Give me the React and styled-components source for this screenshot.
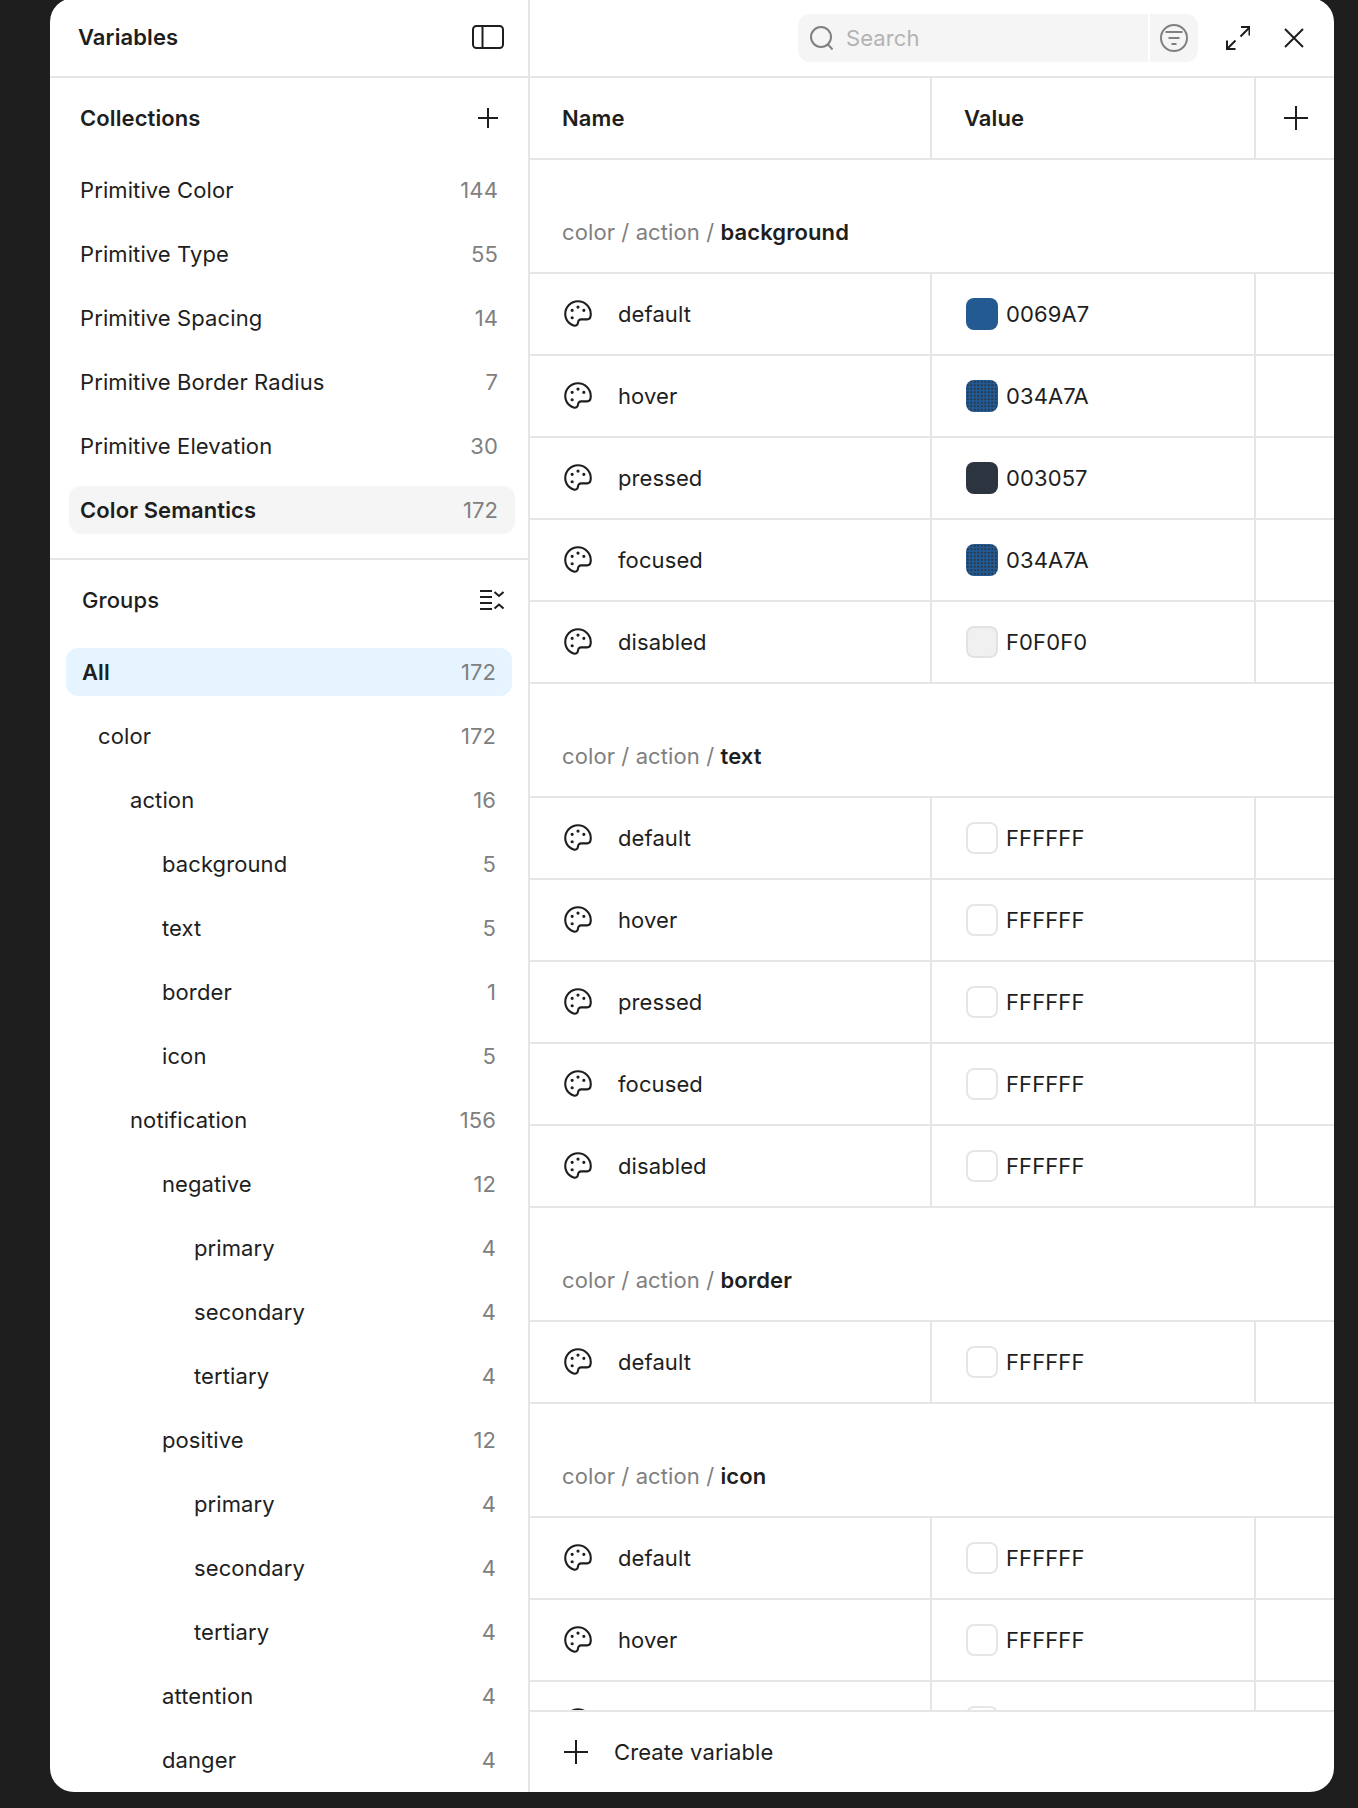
import React from 'react';
import styled, { createGlobalStyle } from 'styled-components';
import { PiPalette } from 'react-icons/pi';

const GlobalStyle = createGlobalStyle`
	html, body {
		margin: 0;
		padding: 0;
		height: 1808px;
		overflow: hidden;
		background: #1e1e1e;
	}
	* {
		box-sizing: border-box;
	}
`;

const LINE = '#e6e6e6';

const Page = styled.div`
	width: 1358px;
	height: 1808px;
	padding-left: 50px;
	font-family: Inter, 'Liberation Sans', sans-serif;
	font-size: 22px;
	letter-spacing: 0.1px;
	color: #1e1e1e;
`;
const Panel = styled.div`
	width: 1284px;
	height: 1794px;
	margin-top: -2px;
	display: flex;
	background: #fff;
	border-radius: 24px;
	overflow: hidden;
`;
const Sidebar = styled.aside`
	width: 480px;
	flex: none;
	border-right: 2px solid ${LINE};
	display: flex;
	flex-direction: column;
`;
const TopBar = styled.div`
	height: 80px;
	flex: none;
	padding: 0 24px 0 28px;
	border-bottom: 2px solid ${LINE};
	display: flex;
	align-items: center;
	justify-content: space-between;
`;
const Title = styled.div`
	font-weight: 600;
`;
const SectionHead = styled.div`
	height: 80px;
	padding: 0 30px 0 30px;
	display: flex;
	align-items: center;
	justify-content: space-between;
	font-weight: 600;
`;
const GroupsHead = styled(SectionHead)`
	padding: 0 24px 0 32px;
	font-weight: 500;
`;
const CollectionList = styled.div`
	padding: 8px 13px 24px 19px;
	display: flex;
	flex-direction: column;
	gap: 16px;
	border-bottom: 2px solid ${LINE};
`;
const GroupList = styled.div`
	padding: 8px 16px 0;
	display: flex;
	flex-direction: column;
	gap: 16px;
`;
const ListRow = styled.div`
	height: 48px;
	flex: none;
	display: flex;
	align-items: center;
	justify-content: space-between;
	padding-right: ${(p) => p.$right}px;
	padding-left: ${(p) => p.$left}px;
	border-radius: 12px;
	background: ${(p) => p.$bg || 'transparent'};
	font-weight: ${(p) => (p.$strong ? 600 : 400)};
`;
const Count = styled.span`
	color: #808080;
	font-weight: 400;
`;
const Main = styled.main`
	flex: 1;
	min-width: 0;
	display: flex;
	flex-direction: column;
`;
const MainBar = styled(TopBar)`
	padding: 2px 30px 0 268px;
	justify-content: flex-start;
`;
const SearchBox = styled.div`
	width: 350px;
	height: 48px;
	background: #f5f5f5;
	border-radius: 12px 0 0 12px;
	padding-left: 11px;
	display: flex;
	align-items: center;
	gap: 13px;
	color: #b3b3b3;
`;
const FilterBox = styled.div`
	width: 48px;
	height: 48px;
	margin-left: 2px;
	background: #f5f5f5;
	border-radius: 0 12px 12px 0;
	display: flex;
	align-items: center;
	justify-content: center;
`;
const BarIcons = styled.div`
	margin-left: auto;
	display: flex;
	align-items: center;
	gap: 34px;
`;
const Row = styled.div`
	height: 82px;
	flex: none;
	display: grid;
	grid-template-columns: 402px 324px 1fr;
	border-bottom: 2px solid ${LINE};
`;
const Cell = styled.div`
	display: flex;
	align-items: center;
	border-right: 2px solid ${LINE};
	padding-left: ${(p) => p.$left || 0}px;
	gap: ${(p) => p.$gap || 0}px;
	font-weight: ${(p) => (p.$strong ? 600 : 400)};
`;
const PlusCell = styled.div`
	display: flex;
	align-items: center;
	justify-content: center;
	padding-left: 2px;
`;
const TableBody = styled.div`
	flex: 1;
	min-height: 0;
	overflow: hidden;
`;
const Heading = styled.div`
	height: 82px;
	margin-top: 32px;
	padding-left: 32px;
	border-bottom: 2px solid ${LINE};
	display: flex;
	align-items: center;
	color: #808080;
	white-space: pre;
`;
const HeadingName = styled.span`
	color: #1e1e1e;
	font-weight: 600;
`;
const Swatch = styled.div`
	width: 32px;
	height: 32px;
	border-radius: 8px;
	background-color: ${(p) => p.$color};
	background-image: ${(p) => (p.$dots ? `radial-gradient(${p.$dots} 0.7px, transparent 1.1px)` : 'none')};
	background-size: 3.5px 3.5px;
	border: ${(p) => (p.$edge ? `2px solid ${p.$edge}` : 'none')};
`;
const Footer = styled.div`
	height: 82px;
	flex: none;
	border-top: 2px solid ${LINE};
	padding-left: 34px;
	display: flex;
	align-items: center;
	gap: 26px;
`;
const PaletteIcon = styled(PiPalette)`
	flex: none;
	font-size: 34px;
`;

const Icon = ({ w, h, children, color = '#1e1e1e', sw = 2 }) => (
	<svg
		width={w}
		height={h}
		viewBox={`0 0 ${w} ${h}`}
		fill="none"
		stroke={color}
		strokeWidth={sw}
		style={{ flex: 'none', display: 'block' }}
	>
		{children}
	</svg>
);

const Plus = ({ size }) => (
	<Icon w={size} h={size}>
		<path d={`M${size / 2} 0V${size}M0 ${size / 2}H${size}`} />
	</Icon>
);

const collections = [
	['Primitive Color', 144],
	['Primitive Type', 55],
	['Primitive Spacing', 14],
	['Primitive Border Radius', 7],
	['Primitive Elevation', 30],
	['Color Semantics', 172, true],
];

const groups = [
	['All', 172, 0],
	['color', 172, 16],
	['action', 16, 48],
	['background', 5, 80],
	['text', 5, 80],
	['border', 1, 80],
	['icon', 5, 80],
	['notification', 156, 48],
	['negative', 12, 80],
	['primary', 4, 112],
	['secondary', 4, 112],
	['tertiary', 4, 112],
	['positive', 12, 80],
	['primary', 4, 112],
	['secondary', 4, 112],
	['tertiary', 4, 112],
	['attention', 4, 80],
	['danger', 4, 80],
];

const white = { hex: 'FFFFFF', color: '#fff', edge: '#e6e6e6' };
const states = ['default', 'hover', 'pressed', 'focused', 'disabled'];
const whiteRows = (names) => names.map((name) => ({ name, ...white }));

const sections = [
	{
		title: 'background',
		rows: [
			{ name: 'default', hex: '0069A7', color: '#235a91' },
			{ name: 'hover', hex: '034A7A', color: '#215a94', dots: '#2c3440' },
			{ name: 'pressed', hex: '003057', color: '#2c3440' },
			{ name: 'focused', hex: '034A7A', color: '#215a94', dots: '#2c3440' },
			{ name: 'disabled', hex: 'F0F0F0', color: '#f0f0f0', edge: '#e2e2e2' },
		],
	},
	{ title: 'text', rows: whiteRows(states) },
	{ title: 'border', rows: whiteRows(['default']) },
	{ title: 'icon', rows: whiteRows(states) },
];

export default function App() {
	return (
		<Page>
			<GlobalStyle />
			<Panel>
				<Sidebar>
					<TopBar>
						<Title>Variables</Title>
						<Icon w={32} h={24}>
							<rect x="1" y="1" width="30" height="22" rx="3.5" />
							<path d="M10.5 1V23" />
						</Icon>
					</TopBar>
					<SectionHead>
						<span>Collections</span>
						<Plus size={20} />
					</SectionHead>
					<CollectionList>
						{collections.map(([name, count, on]) => (
							<ListRow key={name} $left={11} $right={17} $strong={on} $bg={on && '#f5f5f5'}>
								<span>{name}</span>
								<Count>{count}</Count>
							</ListRow>
						))}
					</CollectionList>
					<GroupsHead>
						<span>Groups</span>
						<Icon w={24} h={20}>
							<path d="M0 1H12M0 7H12M0 13H12M0 19H12" />
							<path d="M14.5 2L19 6L23.5 2M14.5 18.500L19 14.500L23.500 18.500" />
						</Icon>
					</GroupsHead>
					<GroupList>
						{groups.map(([name, count, indent], i) => (
							<ListRow
								key={i}
								$left={16 + indent}
								$right={16}
								$strong={i === 0}
								$bg={i === 0 && '#e5f4ff'}
							>
								<span>{name}</span>
								<Count>{count}</Count>
							</ListRow>
						))}
					</GroupList>
				</Sidebar>
				<Main>
					<MainBar>
						<SearchBox>
							<Icon w={24} h={24} color="#808080">
								<circle cx="12" cy="11" r="10" />
								<path d="M19 18.500L23.500 23.500" />
							</Icon>
							<span>Search</span>
						</SearchBox>
						<FilterBox>
							<Icon w={28} h={28} color="#808080">
								<circle cx="14" cy="14" r="13" />
								<path d="M5.500 8H22.500M8.500 14H19.500M11.500 20H16.500" />
							</Icon>
						</FilterBox>
						<BarIcons>
							<Icon w={24} h={24}>
								<path d="M23 2L14.500 10.500M15 1H23.500V9.500" />
								<path d="M1 23L9.500 14.500M1 14.500V23H9.500" />
							</Icon>
							<Icon w={20} h={20}>
								<path d="M1 1L19 19M19 1L1 19" />
							</Icon>
						</BarIcons>
					</MainBar>
					<Row>
						<Cell $left={32} $strong>Name</Cell>
						<Cell $left={32} $strong>Value</Cell>
						<PlusCell>
							<Plus size={24} />
						</PlusCell>
					</Row>
					<TableBody>
						{sections.map((section) => (
							<div key={section.title}>
								<Heading>
									color / action / <HeadingName>{section.title}</HeadingName>
								</Heading>
								{section.rows.map((row) => (
									<Row key={row.name}>
										<Cell $left={31} $gap={23}>
											<PaletteIcon />
											<span>{row.name}</span>
										</Cell>
										<Cell $left={34} $gap={8}>
											<Swatch $color={row.color} $dots={row.dots} $edge={row.edge} />
											<span>{row.hex}</span>
										</Cell>
										<div />
									</Row>
								))}
							</div>
						))}
					</TableBody>
					<Footer>
						<Plus size={24} />
						<span>Create variable</span>
					</Footer>
				</Main>
			</Panel>
		</Page>
	);
}
